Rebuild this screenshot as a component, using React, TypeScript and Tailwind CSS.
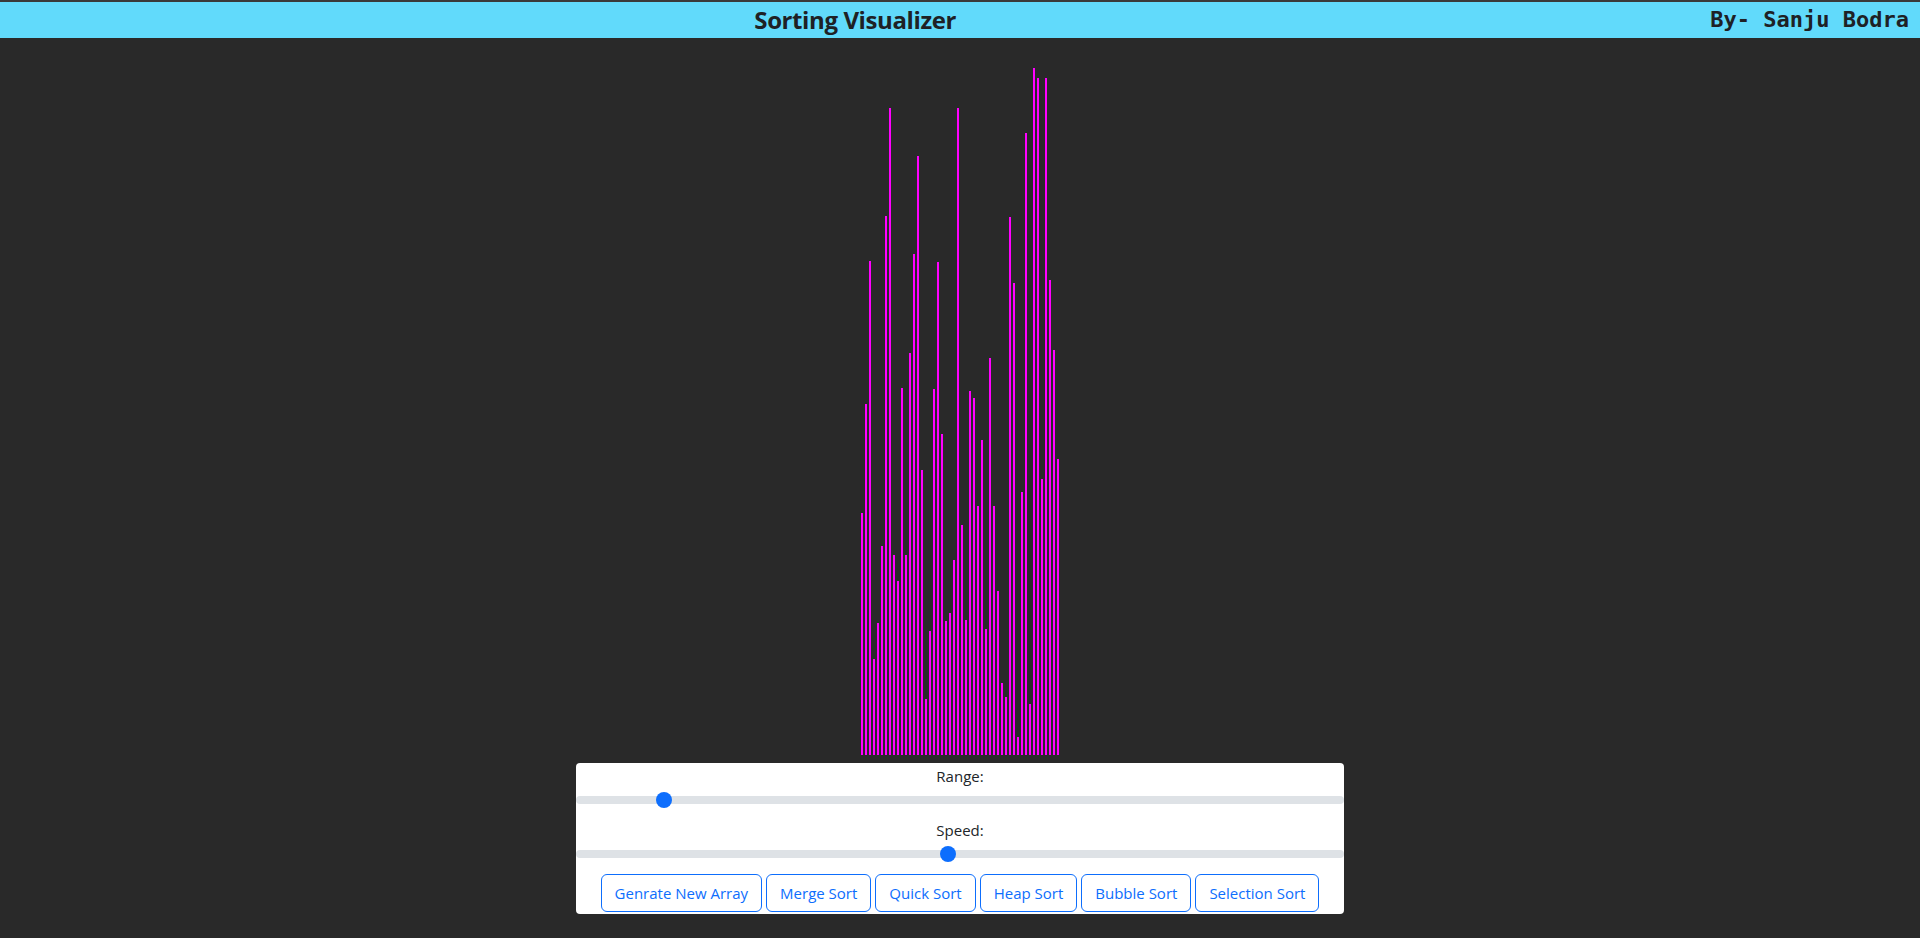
import * as React from "react";

const BAR_HEIGHTS = [
  242, 351, 494, 96, 132, 209, 539, 647, 200, 174, 367, 200, 402, 501, 599,
  285, 56, 124, 366, 493, 321, 134, 142, 195, 647, 230, 135, 364, 357, 249,
  315, 126, 397, 249, 164, 72, 58, 538, 472, 18, 263, 622, 51, 687, 677, 276,
  677, 475, 405, 296,
];

const ALGORITHMS = [
  "Genrate New Array",
  "Merge Sort",
  "Quick Sort",
  "Heap Sort",
  "Bubble Sort",
  "Selection Sort",
];

const rangeClass =
  "block h-6 w-full cursor-pointer appearance-none bg-transparent " +
  "[&::-webkit-slider-runnable-track]:h-2 [&::-webkit-slider-runnable-track]:rounded-full [&::-webkit-slider-runnable-track]:bg-[#dee2e6] " +
  "[&::-webkit-slider-thumb]:-mt-1 [&::-webkit-slider-thumb]:h-4 [&::-webkit-slider-thumb]:w-4 [&::-webkit-slider-thumb]:appearance-none [&::-webkit-slider-thumb]:rounded-full [&::-webkit-slider-thumb]:border-0 [&::-webkit-slider-thumb]:bg-[#0d6efd]";

function Header() {
  return (
    <div className="flex h-[38px] items-center border-t-2 border-[#3a3a3a] bg-[#61dafb] text-[#1e2125]">
      <h1 className="flex-1 text-center font-['Open_Sans','Noto_Sans',sans-serif] text-[24px] font-bold leading-none tracking-[-0.4px]">
        Sorting Visualizer
      </h1>
      <div className="pr-[11px] font-['DejaVu_Sans_Mono','Liberation_Mono',monospace] text-[22px] font-bold leading-none">
        By- Sanju Bodra
      </div>
    </div>
  );
}

function Bars({ heights }: { heights: number[] }) {
  return (
    <div className="flex h-[717px] items-end justify-center">
      {heights.map((h, i) => (
        <div
          key={i}
          className="mx-px w-[2px] bg-[#ff00ff]"
          style={{ height: `${h}px` }}
        />
      ))}
    </div>
  );
}

function Controls() {
  const [range, setRange] = React.useState(80);
  const [speed, setSpeed] = React.useState(364);

  return (
    <div className="mx-auto mt-2 w-[40%] rounded bg-white pb-[2px] pt-px text-center font-['Open_Sans','Noto_Sans',sans-serif] text-[15px] text-[#212529]">
      <label className="block leading-6">Range:</label>
      <input
        type="range"
        min={0}
        max={751}
        value={range}
        onChange={(e) => setRange(Number(e.target.value))}
        className={rangeClass}
      />
      <label className="mt-[6px] block leading-6">Speed:</label>
      <input
        type="range"
        min={0}
        max={751}
        value={speed}
        onChange={(e) => setSpeed(Number(e.target.value))}
        className={rangeClass}
      />
      <div className="mt-[8px] flex justify-center gap-1">
        {ALGORITHMS.map((name) => (
          <button
            key={name}
            className="rounded-md border border-[#0d6efd] px-[13px] py-1.5 text-[15px] leading-6 text-[#0d6efd] hover:bg-[#0d6efd] hover:text-white"
          >
            {name}
          </button>
        ))}
      </div>
    </div>
  );
}

export default function App() {
  return (
    <div className="min-h-[938px] bg-[#292929]">
      <Header />
      <Bars heights={BAR_HEIGHTS} />
      <Controls />
    </div>
  );
}
